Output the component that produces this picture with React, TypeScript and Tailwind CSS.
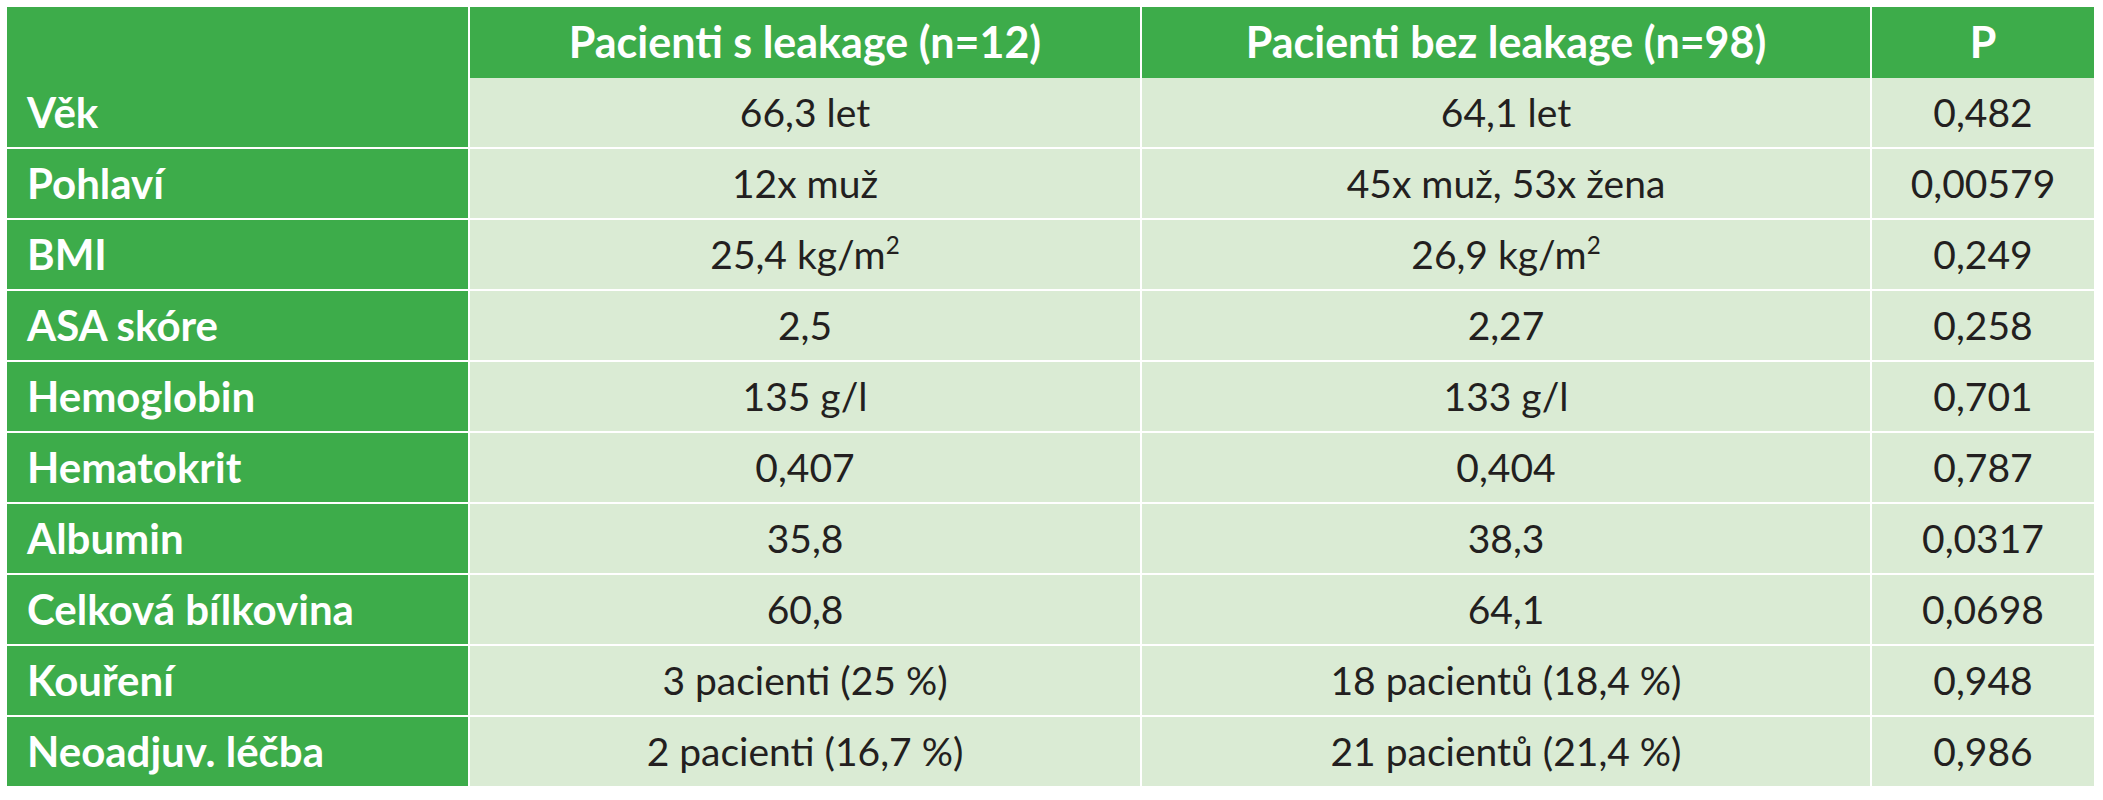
const rows: { label: string; a: React.ReactNode; b: React.ReactNode; p: string }[] = [
  { label: "Věk", a: "66,3 let", b: "64,1 let", p: "0,482" },
  { label: "Pohlaví", a: "12x muž", b: "45x muž, 53x žena", p: "0,00579" },
  {
    label: "BMI",
    a: (
      <>
        25,4 kg/m<sup className="text-[0.62em] -top-[0.62em]">2</sup>
      </>
    ),
    b: (
      <>
        26,9 kg/m<sup className="text-[0.62em] -top-[0.62em]">2</sup>
      </>
    ),
    p: "0,249",
  },
  { label: "ASA skóre", a: "2,5", b: "2,27", p: "0,258" },
  { label: "Hemoglobin", a: "135 g/l", b: "133 g/l", p: "0,701" },
  { label: "Hematokrit", a: "0,407", b: "0,404", p: "0,787" },
  { label: "Albumin", a: "35,8", b: "38,3", p: "0,0317" },
  { label: "Celková bílkovina", a: "60,8", b: "64,1", p: "0,0698" },
  { label: "Kouření", a: "3 pacienti (25 %)", b: "18 pacientů (18,4 %)", p: "0,948" },
  { label: "Neoadjuv. léčba", a: "2 pacienti (16,7 %)", b: "21 pacientů (21,4 %)", p: "0,986" },
];

export default function App() {
  return (
    <div className="w-[2103px] h-[800px] bg-white p-[7px] font-['Lato',sans-serif]">
      <div className="grid grid-cols-[461px_670px_728px_222px] auto-rows-[69px] gap-[2px] bg-white">
        {/* header */}
        <div className="bg-[#3dac4a] h-[71px]" />
        <div className="bg-[#3dac4a] h-[71px] flex items-center justify-center text-white font-bold text-[43px]">
          Pacienti s leakage (n=12)
        </div>
        <div className="bg-[#3dac4a] h-[71px] flex items-center justify-center text-white font-bold text-[43px]">
          Pacienti bez leakage (n=98)
        </div>
        <div className="bg-[#3dac4a] h-[71px] flex items-center justify-center text-white font-bold text-[43px]">
          P
        </div>

        {rows.map((r) => (
          <div key={r.label} className="contents">
            <div className="bg-[#3dac4a] flex items-center pl-[20px] text-white font-bold text-[42px]">
              {r.label}
            </div>
            <div className="bg-[#daebd4] flex items-center justify-center text-[#231f20] text-[39px]">
              <span>{r.a}</span>
            </div>
            <div className="bg-[#daebd4] flex items-center justify-center text-[#231f20] text-[39px]">
              <span>{r.b}</span>
            </div>
            <div className="bg-[#daebd4] flex items-center justify-center text-[#231f20] text-[39px]">
              {r.p}
            </div>
          </div>
        ))}
      </div>
    </div>
  );
}
